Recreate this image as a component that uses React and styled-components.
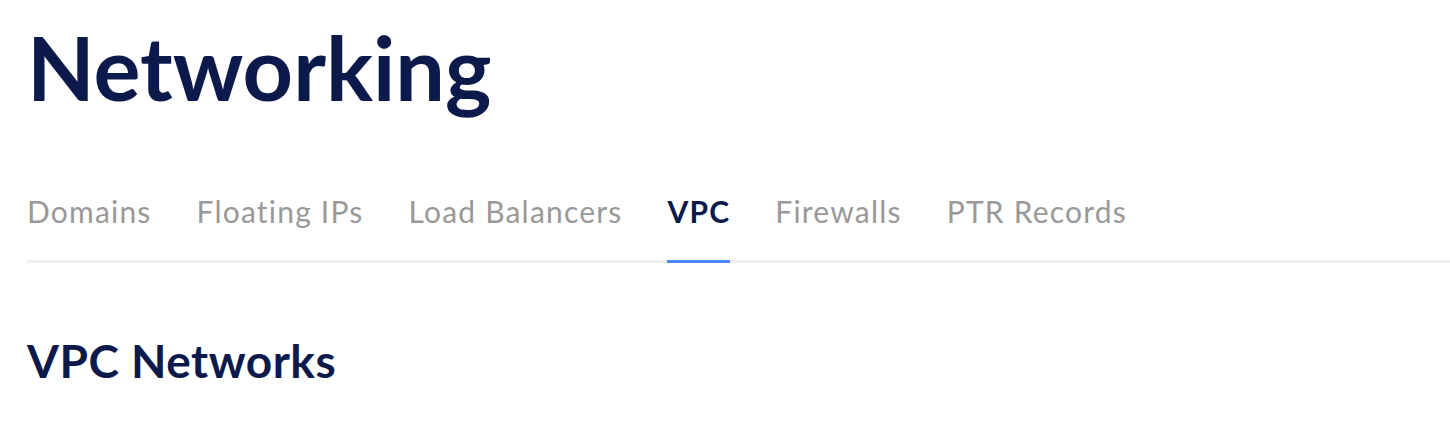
import React from 'react'
import styled, { createGlobalStyle } from 'styled-components'

const tabs = ['Domains', 'Floating IPs', 'Load Balancers', 'VPC', 'Firewalls', 'PTR Records']

/*---> Component <---*/
export default function App() {
  return (
    <>
      <GlobalStyle />
      <Page>
        <Title>Networking</Title>
        <TabList>
          {tabs.map((t) => (
            <Tab key={t} active={t === 'VPC'}>
              {t}
            </Tab>
          ))}
        </TabList>
        <SectionTitle>VPC Networks</SectionTitle>
      </Page>
    </>
  )
}

/*---> Styles <---*/
const GlobalStyle = createGlobalStyle`
  body {
    margin: 0;
    background: #fff;
    font-family: Lato, 'Noto Sans', sans-serif;
  }
`

const Page = styled.div`
  padding: 0 0 0 27px;
`

const Title = styled.h1`
  margin: 0;
  padding-top: 7px;
  height: 186px;
  font-size: 88px;
  line-height: 120px;
  font-weight: 700;
  color: #0b1a4b;
`

const TabList = styled.div`
  display: flex;
  gap: 45px;
  border-bottom: 3px solid #f0f0f0;
`

const Tab = styled.a`
  display: block;
  font-size: 30px;
  letter-spacing: 1.2px;
  line-height: 36px;
  padding-bottom: 31px;
  margin-bottom: -3px;
  border-bottom: 3px solid ${(p) => (p.active ? '#4a86f7' : 'transparent')};
  color: ${(p) => (p.active ? '#0b1a4b' : '#999999')};
  font-weight: ${(p) => (p.active ? 700 : 400)};
  cursor: pointer;
`

const SectionTitle = styled.h2`
  margin: 72px 0 0;
  font-size: 46px;
  letter-spacing: 0.5px;
  line-height: 52px;
  font-weight: 700;
  color: #0b1a4b;
`
